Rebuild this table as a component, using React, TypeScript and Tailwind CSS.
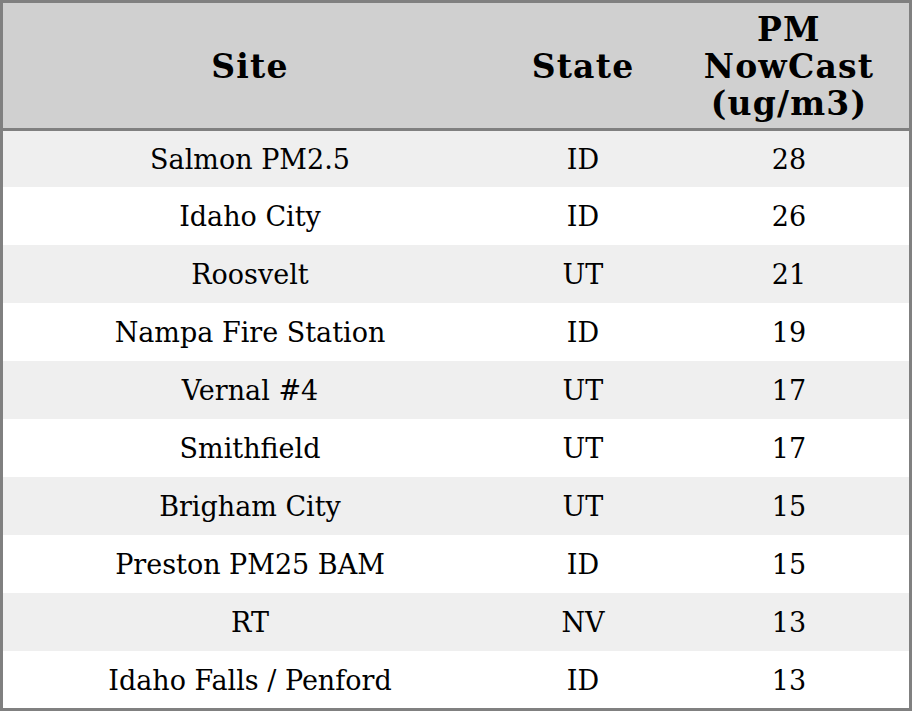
import React from 'react';

interface Reading {
  site: string;
  state: string;
  pm: number;
}

const readings: Reading[] = [
  { site: 'Salmon PM2.5', state: 'ID', pm: 28 },
  { site: 'Idaho City', state: 'ID', pm: 26 },
  { site: 'Roosvelt', state: 'UT', pm: 21 },
  { site: 'Nampa Fire Station', state: 'ID', pm: 19 },
  { site: 'Vernal #4', state: 'UT', pm: 17 },
  { site: 'Smithfield', state: 'UT', pm: 17 },
  { site: 'Brigham City', state: 'UT', pm: 15 },
  { site: 'Preston PM25 BAM', state: 'ID', pm: 15 },
  { site: 'RT', state: 'NV', pm: 13 },
  { site: 'Idaho Falls / Penford', state: 'ID', pm: 13 },
];

const App: React.FC = () => {
  return (
    <div className="w-[912px] h-[711px] bg-white font-['DejaVu_Serif',serif] text-black">
      <div className="border-[3px] border-[#808080] h-full flex flex-col">
        {/* Header */}
        <div className="flex h-[128px] shrink-0 pt-[2px] bg-[#d0d0d0] border-b-[3px] border-[#808080] font-bold text-[33px] leading-[37px] tracking-[1.2px]">
          <div className="w-[494px] flex items-center justify-center">Site</div>
          <div className="w-[172px] flex items-center justify-center">State</div>
          <div className="w-[240px] flex items-center justify-center text-center">
            PM
            <br />
            NowCast
            <br />
            (ug/m3)
          </div>
        </div>

        {/* Rows */}
        <div className="flex-1 flex flex-col text-[27px]">
          {readings.map((r, i) => (
            <div
              key={r.site}
              className={`flex items-center pt-[3px] ${i === 0 ? 'h-[56px]' : i === readings.length - 1 ? 'flex-1' : 'h-[58px]'} ${i % 2 === 0 ? 'bg-[#efefef]' : 'bg-white'}`}
            >
              <div className="w-[494px] text-center">{r.site}</div>
              <div className="w-[172px] text-center">{r.state}</div>
              <div className="w-[240px] text-center">{r.pm}</div>
            </div>
          ))}
        </div>
      </div>
    </div>
  );
};

export default App;
